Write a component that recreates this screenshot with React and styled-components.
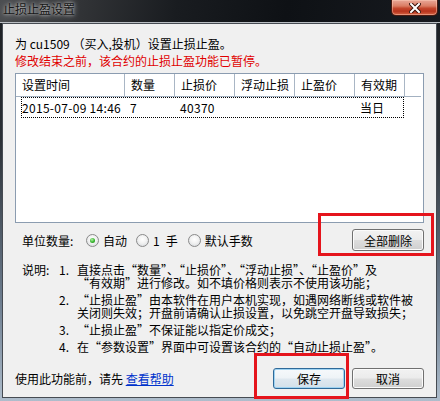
import React from 'react';
import styled, { createGlobalStyle } from 'styled-components';

const GlobalStyle = createGlobalStyle`
  html, body {
    margin: 0;
    padding: 0;
    background: #7b8b9c;
  }
  body {
    font-family: "Noto Sans CJK SC", "Liberation Sans", sans-serif;
    font-size: 12px;
    color: #000;
  }
`;

// 窗口外框
const Window = styled.div`
  width: 440px;
  height: 401px;
  box-sizing: border-box;
  display: flex;
  flex-direction: column;
  background: linear-gradient(to bottom, #1a1d21 0%, #2b3036 35%, #6d7d8f 75%, #aebdcc 100%);
  overflow: hidden;
`;

const TitleBar = styled.div`
  height: 22px;
  flex: none;
  display: flex;
  justify-content: space-between;
  align-items: flex-start;
  padding-left: 3px;
  background: linear-gradient(100deg, #4c4e51 0%, #323437 18%, #191c20 40%, #0e1115 65%, #171a1f 100%);
  border-bottom: 1px solid #b9bdc2;
`;

const TitleText = styled.span`
  line-height: 18px;
  font-size: 12px;
  color: #161616;
  text-shadow: 0 0 6px rgba(255, 255, 255, 0.75), 0 0 3px rgba(255, 255, 255, 0.6);
`;

const CloseButton = styled.div`
  width: 47px;
  height: 16px;
  margin-right: 2px;
  box-sizing: border-box;
  border: 1px solid #4a1a10;
  border-top: none;
  border-radius: 0 0 5px 5px;
  background: linear-gradient(to bottom, #e9a898 0%, #da7d64 40%, #c4472d 55%, #b8341d 75%, #d66444 100%);
  box-shadow: inset 0 0 0 1px rgba(255, 210, 190, 0.45);
  display: flex;
  align-items: center;
  justify-content: center;
`;

const Frame = styled.div`
  flex: 1;
  display: flex;
  padding: 0 3px 3px 2px;
`;

// 客户区
const Client = styled.div`
  flex: 1;
  background: #f0f0f0;
  border: 1px solid #464b52;
  padding: 11px 12px 0 12px;
  display: flex;
  flex-direction: column;
`;

const Line = styled.div`
  line-height: 17px;
  height: 17px;
  white-space: nowrap;
  color: ${(p) => (p.$warn ? '#e00000' : '#000')};
`;

const ListView = styled.div`
  margin-top: 4px;
  height: 150px;
  box-sizing: border-box;
  border: 1px solid #8b9cb0;
  background: #fff;
`;

const HeaderRow = styled.div`
  display: flex;
  height: 23px;
  box-sizing: border-box;
  border-bottom: 1px solid #a3b1c1;
  margin-right: 2px;
`;

const HeaderCell = styled.div`
  width: ${(p) => p.$w}px;
  flex: none;
  box-sizing: border-box;
  padding-left: 6px;
  line-height: 22px;
  border-right: 1px solid #a9b6c5;
  white-space: nowrap;
`;

const DataRow = styled.div`
  display: flex;
  margin-left: 5px;
  width: 383px;
  height: 21px;
  box-sizing: border-box;
  border: 1px dotted #000;
`;

const DataCell = styled.div`
  width: ${(p) => p.$w}px;
  flex: none;
  box-sizing: border-box;
  padding-left: ${(p) => p.$pad}px;
  line-height: 19px;
  white-space: nowrap;
  letter-spacing: ${(p) => p.$ls || 0}px;
`;

const OptionRow = styled.div`
  margin-top: 6px;
  height: 22px;
  display: flex;
  align-items: center;
  padding-left: 7px;
`;

const OptionLabel = styled.span`
  width: 64px;
  flex: none;
`;

const Option = styled.label`
  display: inline-flex;
  align-items: center;
  gap: 4px;
  margin-left: ${(p) => p.$gap || 0}px;
  white-space: nowrap;
`;

const Radio = styled.span`
  width: 13px;
  height: 13px;
  box-sizing: border-box;
  border-radius: 50%;
  border: 1px solid #8a8a8a;
  background: radial-gradient(circle at 50% 40%, #ffffff 0%, #f2f2f2 45%, #cfd3d8 100%);
  display: flex;
  align-items: center;
  justify-content: center;

  &::after {
    content: '';
    display: ${(p) => (p.$checked ? 'block' : 'none')};
    width: 5px;
    height: 5px;
    border-radius: 50%;
    background: radial-gradient(circle at 40% 35%, #b6f0a8 0%, #34b52c 55%, #1d7a18 100%);
  }
`;

const ButtonWrap = styled.div`
  position: relative;
  margin-left: ${(p) => (p.$auto ? 'auto' : '0')};
`;

const Button = styled.div`
  width: 72px;
  height: ${(p) => p.$h || 21}px;
  box-sizing: border-box;
  border: 1px solid ${(p) => (p.$default ? '#2f6a99' : '#707070')};
  border-radius: 3px;
  background: ${(p) =>
    p.$default
      ? 'linear-gradient(to bottom, #f6f9fb 0%, #eef3f7 48%, #dfe8ef 52%, #d3e0ea 100%)'
      : 'linear-gradient(to bottom, #f2f2f2 0%, #ebebeb 48%, #dddddd 52%, #cfcfcf 100%)'};
  box-shadow: inset 0 0 0 1px ${(p) => (p.$default ? '#9fd3f2' : '#fbfbfb')};
  display: flex;
  align-items: center;
  justify-content: center;
`;

// 红色标注框
const Highlight = styled.div`
  position: absolute;
  left: ${(p) => p.$l}px;
  top: ${(p) => p.$t}px;
  right: ${(p) => p.$r}px;
  bottom: ${(p) => p.$b}px;
  border: 3px solid #e5141c;
  pointer-events: none;
  z-index: 2;
`;

const Notes = styled.div`
  margin-top: 12px;
  padding-left: 7px;
  display: flex;
`;

const NoteLabel = styled.div`
  width: 37px;
  flex: none;
  line-height: 13px;
`;

const NoteList = styled.div`
  display: flex;
  flex-direction: column;
  gap: 4px;
`;

const NoteItem = styled.div`
  display: flex;
  line-height: 13px;
`;

const NoteNum = styled.div`
  width: 18px;
  flex: none;
`;

const NoteText = styled.div`
  white-space: nowrap;
`;

const BottomRow = styled.div`
  margin-top: 15px;
  display: flex;
  align-items: center;
  gap: 7px;
`;

const HelpText = styled.span`
  white-space: nowrap;
`;

const HelpLink = styled.a`
  color: #0033cc;
  text-decoration: underline;
  cursor: pointer;
`;

const headers = [
  { title: '设置时间', w: 109 },
  { title: '数量', w: 50 },
  { title: '止损价', w: 60 },
  { title: '浮动止损', w: 60 },
  { title: '止盈价', w: 60 },
  { title: '有效期', w: 50 },
];

const rowCells = [
  { text: '2015-07-09 14:46', w: 102, pad: 0, ls: 0.3 },
  { text: '7', w: 50, pad: 6 },
  { text: '40370', w: 60, pad: 6, ls: 0.3 },
  { text: '', w: 60, pad: 6 },
  { text: '', w: 60, pad: 6 },
  { text: '当日', w: 50, pad: 6 },
];

const notes = [
  [
    '直接点击“数量”、“止损价”、“浮动止损”、“止盈价”及',
    '“有效期”进行修改。如不填价格则表示不使用该功能；',
  ],
  [
    '“止损止盈”由本软件在用户本机实现，如遇网络断线或软件被',
    '关闭则失效；开盘前请确认止损设置，以免跳空开盘导致损失；',
  ],
  ['“止损止盈”不保证能以指定价成交；'],
  ['在“参数设置”界面中可设置该合约的“自动止损止盈”。'],
];

function App() {
  return (
    <>
      <GlobalStyle />
      <Window>
        <TitleBar>
          <TitleText>止损止盈设置</TitleText>
          <CloseButton>
            <svg width="12" height="10" viewBox="0 0 12 10">
              <path d="M2 1 L10 9 M10 1 L2 9" stroke="#3b120a" strokeWidth="4" strokeLinecap="square" />
              <path d="M2 1 L10 9 M10 1 L2 9" stroke="#ffffff" strokeWidth="2" strokeLinecap="square" />
            </svg>
          </CloseButton>
        </TitleBar>

        <Frame>
          <Client>
            <Line>为 cu1509 （买入,投机）设置止损止盈。</Line>
            <Line $warn>修改结束之前，该合约的止损止盈功能已暂停。</Line>

            <ListView>
              <HeaderRow>
                {headers.map((h) => (
                  <HeaderCell key={h.title} $w={h.w}>{h.title}</HeaderCell>
                ))}
              </HeaderRow>
              <DataRow>
                {rowCells.map((c, i) => (
                  <DataCell key={i} $w={c.w} $pad={c.pad} $ls={c.ls}>{c.text}</DataCell>
                ))}
              </DataRow>
            </ListView>

            <OptionRow>
              <OptionLabel>单位数量:</OptionLabel>
              <Option>
                <Radio $checked />
                自动
              </Option>
              <Option $gap={9}>
                <Radio />
                1{'\u2002'}手
              </Option>
              <Option $gap={10}>
                <Radio />
                默认手数
              </Option>
              <ButtonWrap $auto>
                <Button $h={22}>全部删除</Button>
                <Highlight $l={-34} $t={-16} $r={-10} $b={-5} />
              </ButtonWrap>
            </OptionRow>

            <Notes>
              <NoteLabel>说明:</NoteLabel>
              <NoteList>
                {notes.map((lines, i) => (
                  <NoteItem key={i}>
                    <NoteNum>{i + 1}.</NoteNum>
                    <NoteText>
                      {lines.map((l) => (
                        <div key={l}>{l}</div>
                      ))}
                    </NoteText>
                  </NoteItem>
                ))}
              </NoteList>
            </Notes>

            <BottomRow>
              <HelpText>
                使用此功能前，请先 <HelpLink>查看帮助</HelpLink>
              </HelpText>
              <ButtonWrap $auto>
                <Button $default>保存</Button>
                <Highlight $l={-19} $t={-15} $r={-4} $b={-10} />
              </ButtonWrap>
              <ButtonWrap>
                <Button>取消</Button>
              </ButtonWrap>
            </BottomRow>
          </Client>
        </Frame>
      </Window>
    </>
  );
}

export default App;
